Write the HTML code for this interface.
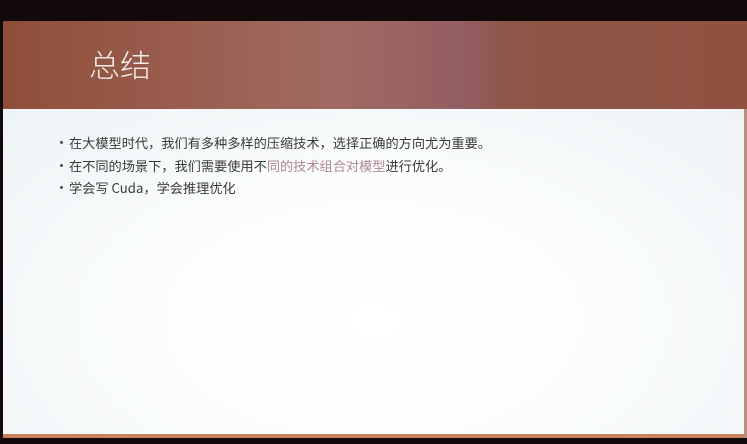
<!DOCTYPE html>
<html><head><meta charset="utf-8"><style>
html,body{margin:0;padding:0}
body{width:747px;height:444px;background:#120a0a;position:relative;overflow:hidden;font-family:"Liberation Sans","Noto Sans CJK SC",sans-serif}
#hdr{position:absolute;left:3px;top:21px;width:744px;height:88px;background:linear-gradient(90deg,#8e4e38 0%,#9a5e50 25%,#a06a62 45%,#935e62 62%,#8e5648 68%,#90513f 100%)}
#hdr span{position:absolute;left:86px;top:20px;font-size:31px;color:#f3ece8;font-family:"Noto Sans CJK SC",sans-serif;font-weight:300}
#body{position:absolute;left:3px;top:109px;width:741px;height:325px;background:radial-gradient(ellipse at 50% 65%,#ffffff 0%,#fafcfd 50%,#eef3f5 100%)}
#strip{position:absolute;left:3px;top:434px;width:741px;height:4px;background:#c88260}
#rt{position:absolute;left:744px;top:109px;width:3px;height:329px;background:#b89080}
ul{position:absolute;left:54px;top:132px;margin:0;padding:0;list-style:none;font-size:13.2px;color:#3a3a3a}
li{height:22.5px;line-height:22.5px;padding-left:15px;position:relative;font-family:"Noto Sans CJK SC",sans-serif}
li:before{content:"•";position:absolute;left:0;color:#555;font-size:15px}
.p{color:#b08890}
</style></head><body>
<div id="hdr"><span>总结</span></div>
<div id="body"></div>
<div id="rt"></div>
<div id="strip"></div>
<ul>
<li>在大模型时代，我们有多种多样的压缩技术，选择正确的方向尤为重要。</li>
<li>在不同的场景下，我们需要使用不<span class="p">同的技术组合对模型</span>进行优化。</li>
<li>学会写 Cuda，学会推理优化</li>
</ul>
</body></html>
